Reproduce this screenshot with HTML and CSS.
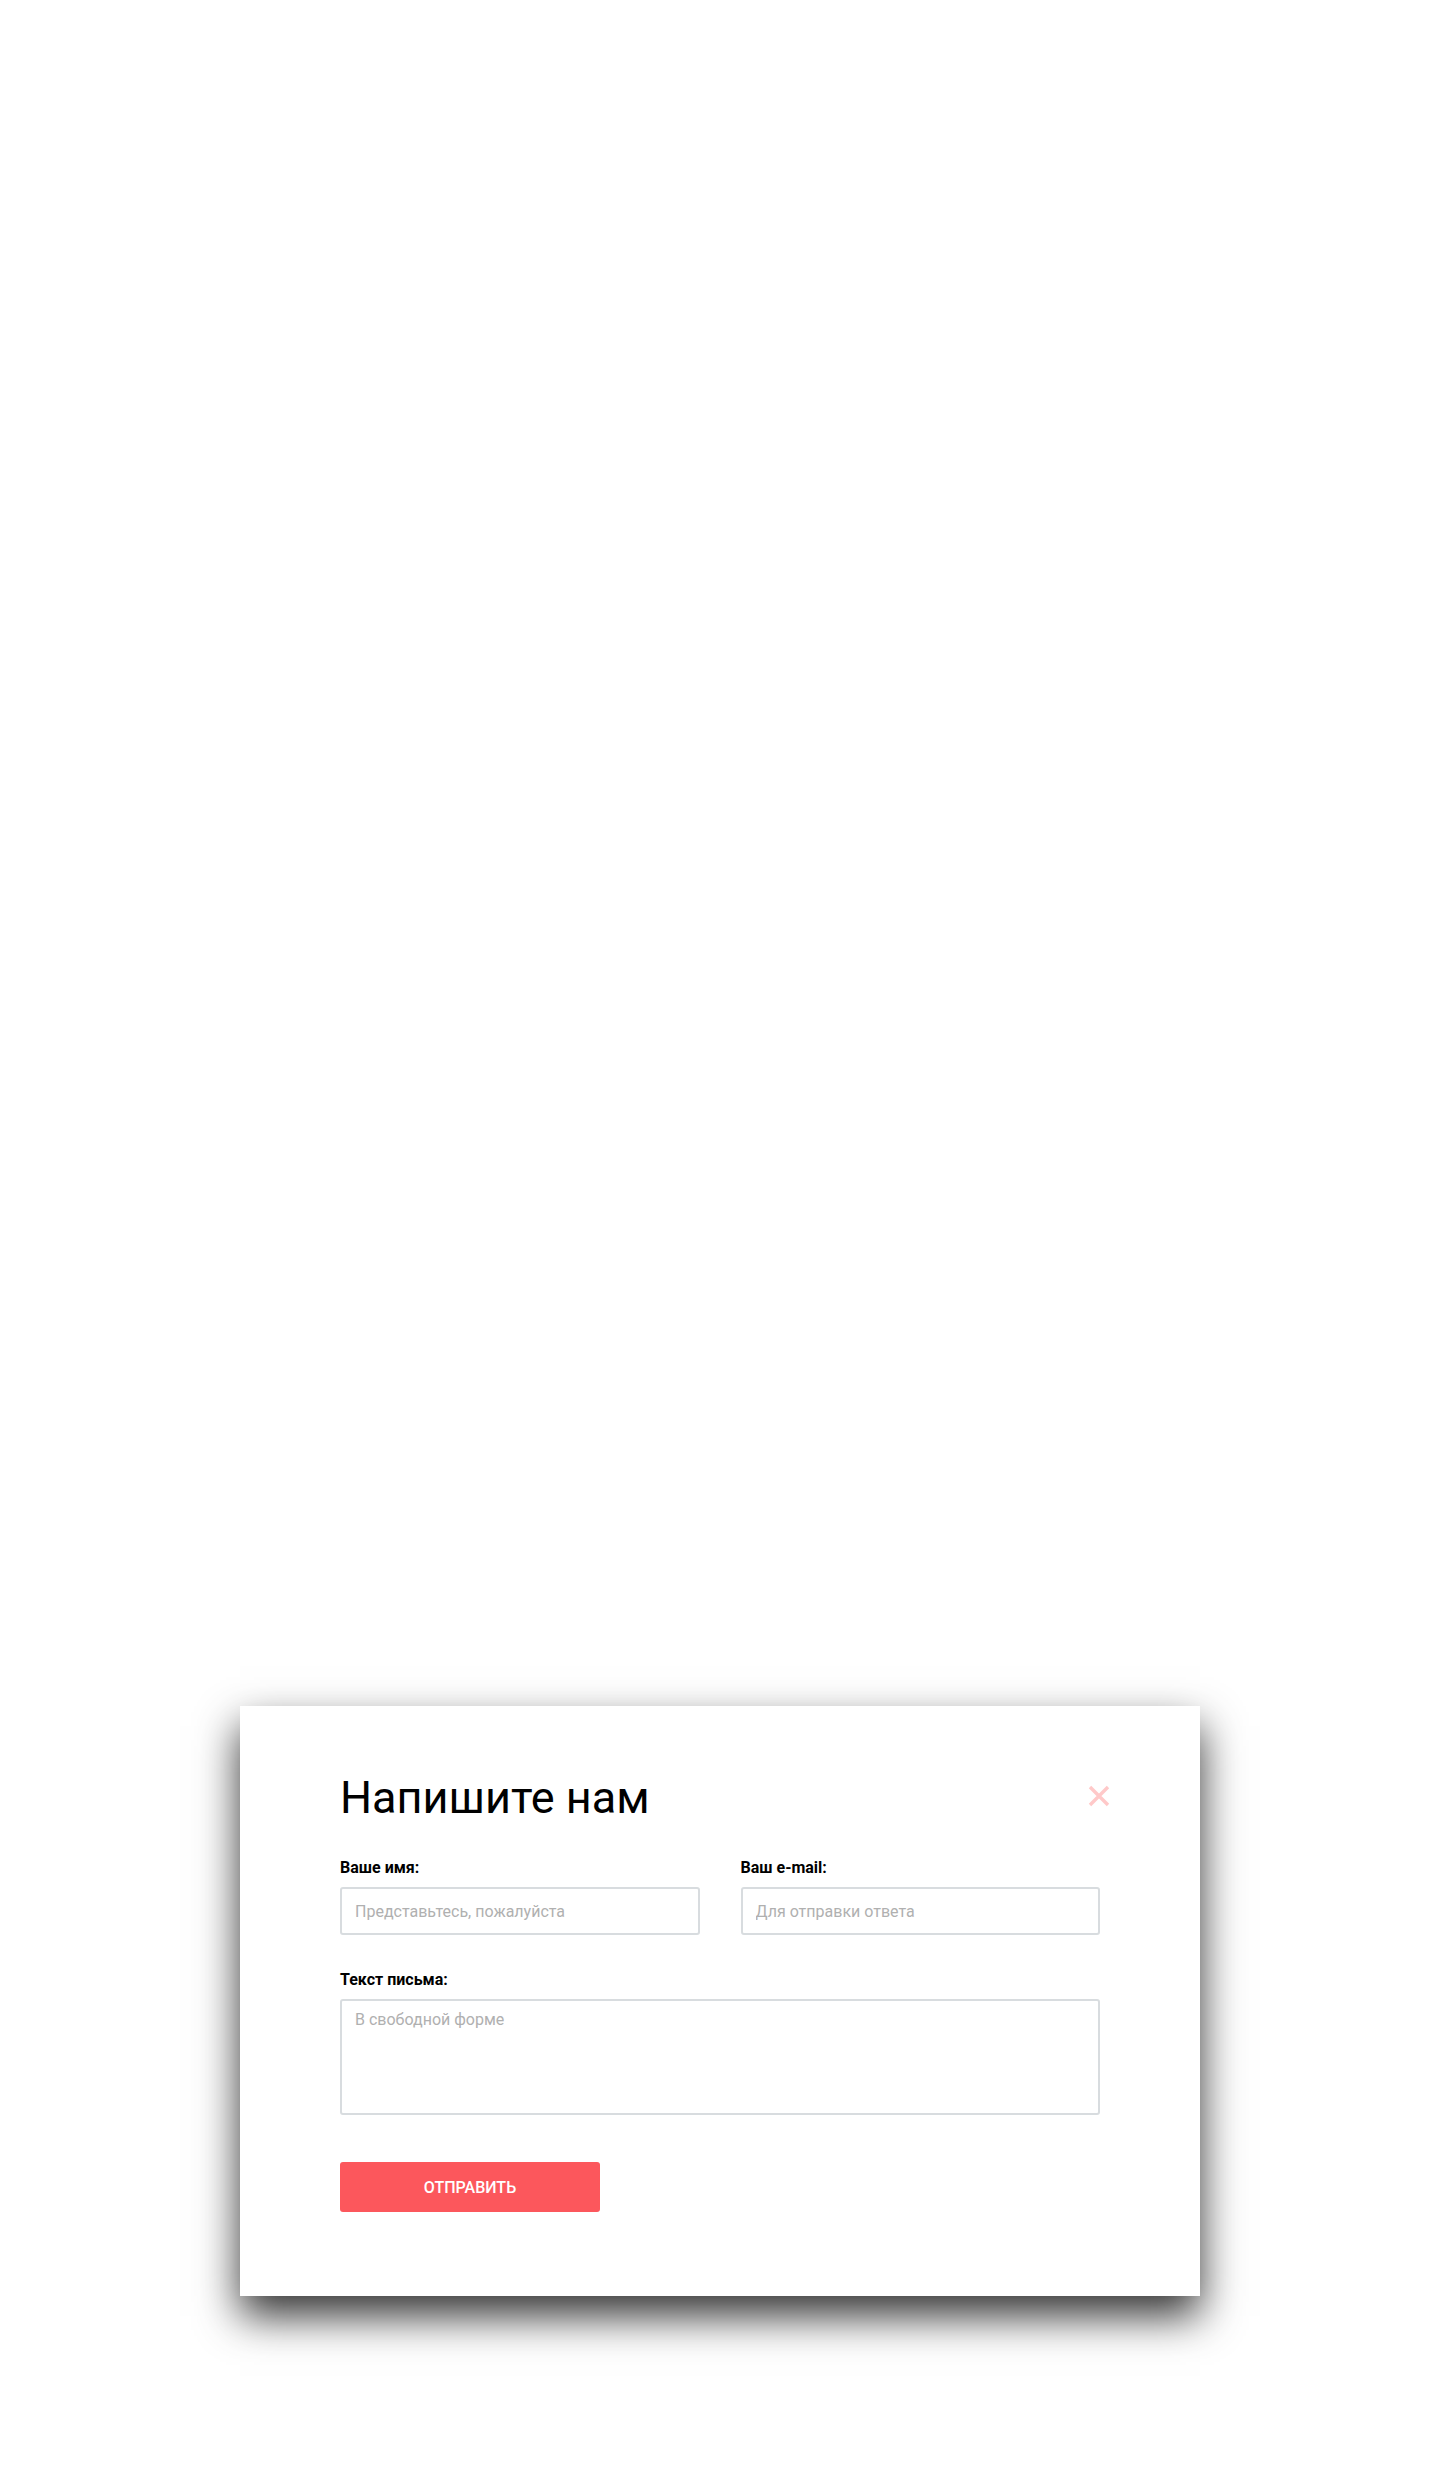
FILE: index.html
```html
<!DOCTYPE html>
<html lang="ru">
<head>
<meta charset="utf-8">
<title>Напишите нам</title>
<link rel="stylesheet" href="styles.css">
</head>
<body>
<div class="page">
  <div class="modal">
    <div class="modal-head">
      <h1 class="modal-title">Напишите нам</h1>
      <button class="close" type="button" aria-label="Закрыть">
        <svg width="22" height="22" viewBox="0 0 22 22"><path d="M2 2 L20 20 M20 2 L2 20" stroke="#ffc9c9" stroke-width="3.4" stroke-linecap="butt" fill="none"/></svg>
      </button>
    </div>
    <form class="form">
      <div class="row">
        <label class="field">
          <span class="label">Ваше имя:</span>
          <input class="input" type="text" placeholder="Представьтесь, пожалуйста">
        </label>
        <label class="field">
          <span class="label">Ваш e-mail:</span>
          <input class="input" type="text" placeholder="Для отправки ответа">
        </label>
      </div>
      <label class="field">
        <span class="label">Текст письма:</span>
        <textarea class="textarea" placeholder="В свободной форме"></textarea>
      </label>
      <button class="submit" type="button">ОТПРАВИТЬ</button>
    </form>
  </div>
</div>
</body>
</html>
```

FILE: styles.css
```css
* { box-sizing: border-box; }
html, body { margin: 0; padding: 0; background: #fff; }
body { font-family: Roboto, "Noto Sans", Arial, sans-serif; color: #000; }

.page {
  padding: 1706px 240px 180px;
}

.modal {
  width: 960px;
  height: 590px;
  background: #fff;
  box-shadow: 0 20px 40px rgba(0, 0, 0, 0.8);
  padding: 60px 100px 0;
}

.modal-head {
  display: flex;
  justify-content: space-between;
  align-items: center;
  height: 64px;
}

.modal-title {
  margin: 0;
  font-size: 45px;
  font-weight: 400;
  line-height: 56px;
  letter-spacing: 0;
}

.close {
  border: 0;
  background: none;
  padding: 0;
  width: 22px;
  height: 22px;
  margin-right: -10px;
  margin-top: -4px;
  display: flex;
  cursor: pointer;
}

.form {
  margin-top: 28px;
  display: flex;
  flex-direction: column;
}

.row {
  display: grid;
  grid-template-columns: 1fr 1fr;
  column-gap: 41px;
  margin-bottom: 35px;
}

.field { display: flex; flex-direction: column; }

.label {
  font-size: 16px;
  font-weight: 700;
  line-height: 20px;
  margin-bottom: 9px;
}

.input, .textarea {
  font-family: Roboto, "Noto Sans", Arial, sans-serif;
  font-size: 16px;
  border: 2px solid #d8dcdf;
  border-radius: 3px;
  background: #fff;
  padding: 0 13px;
  outline: none;
}

.input { height: 48px; }

.textarea {
  height: 116px;
  padding-top: 8px;
  resize: none;
  line-height: 22px;
}

.input::placeholder, .textarea::placeholder { color: #b0b0b0; }

.submit {
  margin-top: 47px;
  width: 260px;
  height: 50px;
  border: 0;
  border-radius: 3px;
  background: #fc575c;
  color: #fff;
  font-family: Roboto, "Noto Sans", Arial, sans-serif;
  font-size: 16px;
  font-weight: 500;
  letter-spacing: 0;
  cursor: pointer;
}
```
